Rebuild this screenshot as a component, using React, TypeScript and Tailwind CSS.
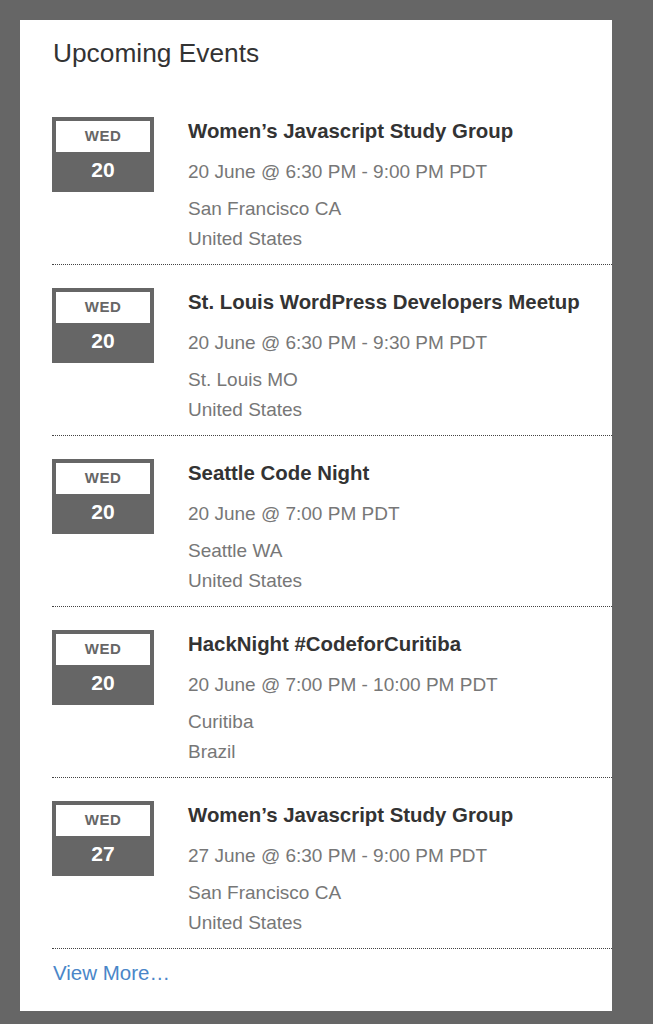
const EVENTS = [
  { day: "WED", date: "20", title: "Women’s Javascript Study Group", time: "20 June @ 6:30 PM - 9:00 PM PDT", city: "San Francisco CA", country: "United States" },
  { day: "WED", date: "20", title: "St. Louis WordPress Developers Meetup", time: "20 June @ 6:30 PM - 9:30 PM PDT", city: "St. Louis MO", country: "United States" },
  { day: "WED", date: "20", title: "Seattle Code Night", time: "20 June @ 7:00 PM PDT", city: "Seattle WA", country: "United States" },
  { day: "WED", date: "20", title: "HackNight #CodeforCuritiba", time: "20 June @ 7:00 PM - 10:00 PM PDT", city: "Curitiba", country: "Brazil" },
  { day: "WED", date: "27", title: "Women’s Javascript Study Group", time: "27 June @ 6:30 PM - 9:00 PM PDT", city: "San Francisco CA", country: "United States" },
];

function DateBadge({ day, date }: { day: string; date: string }) {
  return (
    <div className="w-[102px] h-[75px] flex-shrink-0 bg-[#666666] p-[4px] flex flex-col">
      <div className="h-[31px] bg-white flex items-center justify-center text-[15px] font-bold text-[#666666] tracking-[0.5px]">
        {day}
      </div>
      <div className="flex-1 flex items-center justify-center text-[21px] font-bold text-white">
        {date}
      </div>
    </div>
  );
}

export default function App() {
  return (
    <div className="min-h-screen bg-[#666666] pt-[20px] pl-[20px] pb-[15px]" style={{ fontFamily: '"Liberation Sans", Arial, sans-serif' }}>
      <div className="w-[592px] bg-white pl-[32px] pt-[18px] pb-[26px]">
        <h2 className="text-[26.3px] leading-[30px] text-[#333333] pl-[1px] mb-[26px]">Upcoming Events</h2>

        <ul>
          {EVENTS.map((ev, i) => (
            <li key={i} className="flex gap-[34px] pt-[23px] pb-[11px] border-b border-dotted border-[#444444]">
              <DateBadge day={ev.day} date={ev.date} />
              <div className="min-w-0">
                <h3 className="text-[20.4px] leading-[28px] font-bold text-[#333333] whitespace-nowrap">{ev.title}</h3>
                <p className="mt-[13px] text-[19px] leading-[28px] text-[#777777]">{ev.time}</p>
                <p className="mt-[9px] text-[19px] leading-[28px] text-[#777777]">{ev.city}</p>
                <p className="mt-[2px] text-[19px] leading-[28px] text-[#777777]">{ev.country}</p>
              </div>
            </li>
          ))}
        </ul>

        <a href="#" className="block mt-[12px] pl-[1px] text-[20.5px] leading-[24px] text-[#4a86c8]">View More…</a>
      </div>
    </div>
  );
}
